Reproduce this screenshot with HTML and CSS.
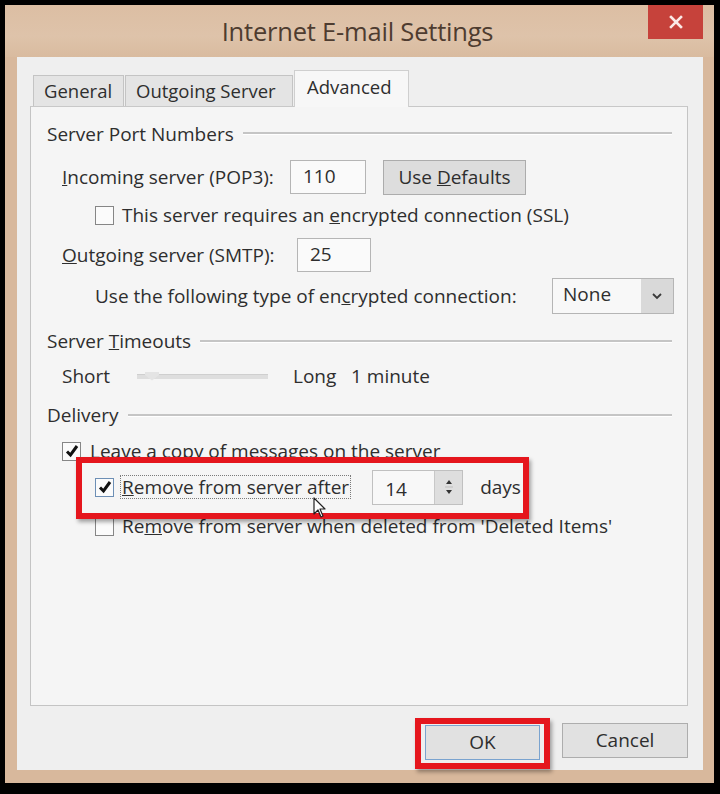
FILE: index.html
```html
<!DOCTYPE html>
<html>
<head>
<meta charset="utf-8">
<link rel="stylesheet" href="styles.css">
</head>
<body>
<div class="window">
  <div class="titlebar">
    <div class="title">Internet E-mail Settings</div>
    <div class="close"><svg width="14" height="14" viewBox="0 0 14 14"><path d="M2 2 L12 12 M12 2 L2 12" stroke="#fbe9e6" stroke-width="2.6" stroke-linecap="square"/></svg></div>
  </div>
  <div class="client">
    <div class="tabs">
      <div class="tab">General</div>
      <div class="tab">Outgoing Server</div>
      <div class="tab active">Advanced</div>
    </div>
    <div class="panel">
      <div class="row r1 group"><span class="glabel">Server Port Numbers</span><span class="gline"></span></div>
      <div class="row r2 ind1">
        <span class="lbl w-in"><u>I</u>ncoming server (POP3):</span>
        <span class="field f-in">110</span>
        <span class="btn btn-def">Use <u>D</u>efaults</span>
      </div>
      <div class="row r3 ind2">
        <span class="cb"></span>
        <span class="lbl">This server requires an <u>e</u>ncrypted connection (SSL)</span>
      </div>
      <div class="row r4 ind1">
        <span class="lbl w-out"><u>O</u>utgoing server (SMTP):</span>
        <span class="field f-out">25</span>
      </div>
      <div class="row r5 ind2">
        <span class="lbl w-use">Use the following type of en<u>c</u>rypted connection:</span>
        <span class="select"><span class="sel-val">None</span><span class="sel-arrow"><svg width="12" height="8" viewBox="0 0 12 8"><path d="M2 2 L6 6 L10 2" fill="none" stroke="#3a3a3a" stroke-width="1.8"/></svg></span></span>
      </div>
      <div class="row r6 group"><span class="glabel">Server <u>T</u>imeouts</span><span class="gline"></span></div>
      <div class="row r7 ind1">
        <span class="lbl w-short">Short</span>
        <span class="slider"><span class="thumb"></span></span>
        <span class="lbl w-long">Long</span>
        <span class="lbl">1 minute</span>
      </div>
      <div class="row r8 group"><span class="glabel">Delivery</span><span class="gline"></span></div>
      <div class="row r9 ind1">
        <span class="cb checked"><svg width="16" height="16" viewBox="0 0 16 16"><path d="M3 8.5 L6.5 12 L13 3" fill="none" stroke="#111" stroke-width="3"/></svg></span>
        <span class="lbl"><u>L</u>eave a copy of messages on the server</span>
      </div>
      <div class="row r10 ind2">
        <span class="cb checked focus"><svg width="16" height="16" viewBox="0 0 16 16"><path d="M3 8.5 L6.5 12 L13 3" fill="none" stroke="#111" stroke-width="3"/></svg></span>
        <span class="lbl focusrect"><u>R</u>emove from server after</span>
        <span class="spin"><span class="spin-val">14</span><span class="spin-btns"><svg width="10" height="24" viewBox="0 0 10 24"><path d="M5 5 L8 9 L2 9 Z" fill="#333"/><line x1="1" y1="12" x2="9" y2="12" stroke="#bdbdbd" stroke-width="1"/><path d="M2 15 L8 15 L5 19 Z" fill="#333"/></svg></span></span>
        <span class="lbl">days</span>
      </div>
      <div class="row r11 ind2">
        <span class="cb"></span>
        <span class="lbl">Re<u>m</u>ove from server when deleted from 'Deleted Items'</span>
      </div>
      <div class="highlight hl-remove"></div>
      <svg class="cursor" width="14" height="22" viewBox="0 0 14 22"><path d="M1 1 L1 17 L5 13 L8 20 L10 19 L7 12 L12 12 Z" fill="#ffffff" stroke="#222" stroke-width="1.2" stroke-linejoin="round"/></svg>
    </div>
    <div class="footer">
      <div class="btn btn-ok">OK<div class="highlight hl-ok"></div></div>
      <div class="btn btn-cancel">Cancel</div>
    </div>
  </div>
</div>
</body>
</html>
```

FILE: styles.css
```css
* { box-sizing: border-box; }
html, body { margin: 0; padding: 0; background: #000; }
body {
  width: 720px;
  height: 794px;
  overflow: hidden;
  font-family: "Open Sans", "Noto Sans", sans-serif;
  color: #2e2e2e;
}
.window {
  margin: 5px 6px 0 5px;
  width: 709px;
  height: 778px;
  background: #d8b89c;
  display: flex;
  flex-direction: column;
}
.titlebar {
  height: 52px;
  position: relative;
  background: linear-gradient(180deg, #dcbea3 0%, #dec3aa 60%, #d9bb9f 100%);
  display: flex;
  align-items: center;
  justify-content: center;
}
.title {
  font-size: 25.5px;
  color: #4e3c30;
  letter-spacing: -0.2px;
  margin-left: -4px;
}
.close {
  position: absolute;
  right: 11px;
  top: 0;
  width: 55px;
  height: 34px;
  background: #c6423b;
  display: flex;
  align-items: center;
  justify-content: center;
}
.client {
  margin: 0 11px 0 12px;
  height: 713px;
  background: #efefef;
  display: flex;
  flex-direction: column;
}
.tabs {
  height: 49px;
  padding: 13px 0 0 16px;
  display: flex;
  align-items: flex-end;
}
.tab {
  height: 31px;
  padding: 0 0 0 10px;
  border: 1px solid #c4c4c4;
  border-bottom: none;
  background: #e4e4e4;
  font-size: 18.5px;
  font-weight: 500;
  line-height: 30px;
  color: #2e2e2e;
  margin-right: 1px;
  white-space: nowrap;
}
.tab:first-child { width: 91px; }
.tab:nth-child(2) { width: 168px; }
.tab.active {
  height: 37px;
  width: 115px;
  padding-left: 12px;
  background: #f7f7f7;
  border-color: #cfcfcf;
  line-height: 32px;
  margin-bottom: -1px;
  position: relative;
  z-index: 1;
}
.panel {
  position: relative;
  margin: 0 15px 0 13px;
  height: 600px;
  background: #f5f5f5;
  border: 1px solid #c4c4c4;
  border-top-color: #c8c8c8;
}
.row {
  display: flex;
  align-items: center;
  font-size: 19px;
  font-weight: 500;
  white-space: nowrap;
}
.r1 { height: 53px; }
.r2 { height: 34px; }
.r3 { height: 42px; }
.r4 { height: 38px; }
.r5 { height: 44px; }
.r6 { height: 46px; }
.r7 { height: 24px; }
.r8 { height: 54px; }
.r9 { height: 18px; }
.r10 { height: 54px; }
.r11 { height: 24px; }
.group { padding-left: 16px; padding-right: 15px; }
.gline {
  flex: 1;
  height: 3px;
  margin-left: 9px;
  border-top: 2px solid #c5c5c5;
  border-bottom: 1px solid #ffffff;
}
.ind1 { padding-left: 31px; }
.ind2 { padding-left: 64px; }
.w-in { width: 228px; }
.w-out { width: 235px; }
.w-use { width: 457px; }
.w-short { width: 75px; }
.w-long { width: 58px; }
.field {
  height: 34px;
  background: #fafafa;
  border: 1px solid #b5b5b5;
  padding-left: 12px;
  line-height: 31px;
}
.f-in { width: 76px; }
.f-out { width: 74px; }
.btn-def {
  margin-left: 17px;
  width: 143px;
  height: 35px;
  background: #dddddd;
  border: 1px solid #acacac;
  line-height: 32px;
  text-align: center;
}
.btn { color: #2e2e2e; font-size: 19px; font-weight: 500; }
.cb {
  width: 19px;
  height: 19px;
  border: 1px solid #868686;
  background: #fbfbfb;
  margin-right: 8px;
  display: flex;
  align-items: center;
  justify-content: center;
  flex: none;
}
.r9 .cb { margin-right: 9px; }
.cb.focus { border-color: #6d8fb5; }
.select {
  width: 122px;
  height: 36px;
  border: 1px solid #b5b5b5;
  background: #f8f8f8;
  display: flex;
}
.sel-val { flex: 1; padding-left: 10px; line-height: 31px; }
.sel-arrow {
  width: 32px;
  background: #d9d9d9;
  display: flex;
  align-items: center;
  justify-content: center;
}
.slider {
  width: 131px;
  height: 5px;
  background: #dedede;
  border-top: 1px solid #cfcfcf;
  margin-right: 25px;
  position: relative;
}
.thumb {
  position: absolute;
  left: 8px;
  top: -3px;
  width: 14px;
  height: 9px;
  background: #e4e4e4;
  clip-path: polygon(0 0, 100% 0, 100% 40%, 50% 100%, 0 40%);
}
.focusrect {
  border: 1px dotted #7a7a7a;
  padding: 0 1px;
  height: 24px;
  line-height: 22px;
  margin-left: -2px;
}
.spin {
  margin-left: 21px;
  width: 91px;
  height: 35px;
  border: 1px solid #c0c0c0;
  background: #f8f8f8;
  display: flex;
  margin-right: 17px;
}
.spin-val { flex: 1; padding-left: 12px; line-height: 36px; }
.spin-btns {
  width: 28px;
  background: #dedede;
  border-left: 1px solid #c8c8c8;
  display: flex;
  align-items: center;
  justify-content: center;
}
.highlight {
  position: absolute;
  border: 6px solid #e5161d;
  box-shadow: 2px 3px 4px rgba(0,0,0,0.35);
  pointer-events: none;
}
.hl-remove {
  left: 45px;
  top: 350px;
  width: 453px;
  height: 62px;
}
.cursor {
  position: absolute;
  left: 282px;
  top: 390px;
}
.footer {
  flex: 1;
  display: flex;
  justify-content: flex-end;
  align-items: flex-start;
  padding: 17px 15px 0 0;
  gap: 22px;
}
.btn-ok, .btn-cancel {
  position: relative;
  height: 35px;
  background: #e1e1e1;
  border: 1px solid #adadad;
  text-align: center;
  line-height: 32px;
}
.btn-ok { width: 115px; margin-top: 2px; border-color: #7aa3cf; }
.btn-cancel { width: 126px; }
.hl-ok {
  left: -11px;
  top: -8px;
  width: 135px;
  height: 51px;
}
```
